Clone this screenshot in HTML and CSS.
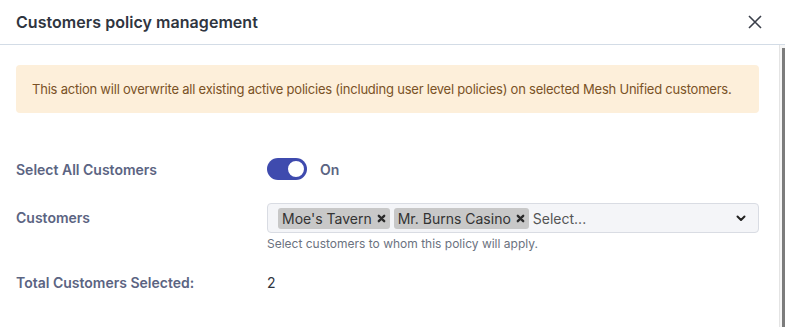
FILE: index.html
```html
<!DOCTYPE html>
<html lang="en">
<head>
    <meta charset="UTF-8" />
    <meta name="viewport" content="width=device-width, initial-scale=1.0" />
    <title>Customers policy management</title>
    <link rel="stylesheet" href="styles.css">
</head>
<body>
    <div class="modal">
        <header class="modal-header">
            <h2 class="modal-title">Customers policy management</h2>
            <button class="close-btn" aria-label="Close">
                <svg width="14" height="14" viewBox="0 0 14 14">
                    <path d="M1 1 L13 13 M13 1 L1 13" stroke="#3a3f4a" stroke-width="1.6" fill="none" />
                </svg>
            </button>
        </header>

        <div class="modal-body">
            <div class="body-content">
                <div class="alert">
                    This action will overwrite all existing active policies (including user level policies) on selected Mesh Unified customers.
                </div>

                <div class="form-row toggle-row">
                    <label class="form-label">Select All Customers</label>
                    <div class="form-field">
                        <span class="switch on"><span class="knob"></span></span>
                        <span class="switch-text">On</span>
                    </div>
                </div>

                <div class="form-row select-row">
                    <label class="form-label">Customers</label>
                    <div class="form-field column">
                        <div class="multi-select">
                            <span class="tag">Moe's Tavern
                                <svg width="9" height="9" viewBox="0 0 10 10"><path d="M2 2 L8 8 M8 2 L2 8" stroke="#2b2b2b" stroke-width="2.6" stroke-linecap="round" /></svg>
                            </span>
                            <span class="tag">Mr. Burns Casino
                                <svg width="9" height="9" viewBox="0 0 10 10"><path d="M2 2 L8 8 M8 2 L2 8" stroke="#2b2b2b" stroke-width="2.6" stroke-linecap="round" /></svg>
                            </span>
                            <span class="placeholder">Select...</span>
                            <svg class="chevron" width="10" height="7" viewBox="0 0 10 7"><path d="M1.5 1.5 L5 5 L8.5 1.5" stroke="#222" stroke-width="2" fill="none" stroke-linecap="round" stroke-linejoin="round" /></svg>
                        </div>
                        <small class="help-text">Select customers to whom this policy will apply.</small>
                    </div>
                </div>

                <div class="form-row total-row">
                    <label class="form-label">Total Customers Selected:</label>
                    <div class="form-field value">2</div>
                </div>
            </div>
            <div class="scrollbar"><div class="thumb"></div></div>
        </div>
    </div>
</body>
</html>
```

FILE: styles.css
```css
:root {
    --title-color: #2f3540;
    --label-color: #5b6482;
    --border-color: #d3dce6;
    --alert-bg: #fdefda;
    --alert-text: #7a5226;
    --primary: #3f4bae;
    --input-bg: #f4f5f8;
}
html, body {
    margin: 0;
    padding: 0;
    height: 100%;
}
body {
    font-family: 'Inter', 'Liberation Sans', Arial, sans-serif;
    background: #ffffff;
    color: var(--title-color);
    overflow: hidden;
}
.modal {
    display: flex;
    flex-direction: column;
    height: 327px;
}
.modal-header {
    display: flex;
    align-items: center;
    justify-content: space-between;
    height: 44px;
    padding: 0 22px 0 16px;
    border-bottom: 1px solid var(--border-color);
    flex-shrink: 0;
}
.modal-title {
    margin: 0;
    font-size: 16px;
    font-weight: 600;
    color: var(--title-color);
    letter-spacing: 0.05px;
}
.close-btn {
    background: none;
    border: none;
    padding: 0;
    width: 16px;
    height: 16px;
    display: flex;
    align-items: center;
    justify-content: center;
    cursor: pointer;
}
.modal-body {
    display: flex;
    flex: 1;
    min-height: 0;
}
.body-content {
    flex: 1;
    padding: 20px 20px 0 16px;
}
.scrollbar {
    width: 5px;
    border-left: 1px solid #e4e4e4;
    background: #f6f6f6;
    display: flex;
    justify-content: flex-end;
    padding-top: 3px;
}
.thumb {
    width: 3px;
    height: 100%;
    background: #7c7c7c;
}
.alert {
    background: var(--alert-bg);
    color: var(--alert-text);
    font-size: 13px;
    letter-spacing: -0.22px;
    line-height: 16px;
    padding: 16px 16px;
    border-radius: 4px;
    white-space: nowrap;
}
.form-row {
    display: flex;
    align-items: flex-start;
}
.form-label {
    width: 251px;
    flex-shrink: 0;
    font-size: 14px;
    font-weight: 600;
    color: var(--label-color);
}
.form-field {
    flex: 1;
    display: flex;
    align-items: center;
}
.form-field.column {
    flex-direction: column;
    align-items: stretch;
}
.toggle-row {
    margin-top: 45px;
    align-items: center;
    height: 22px;
}
.switch {
    width: 40px;
    height: 22px;
    border-radius: 11px;
    background: #c9ccd6;
    position: relative;
    box-sizing: border-box;
}
.switch.on {
    background: var(--primary);
}
.knob {
    position: absolute;
    top: 1px;
    right: 1px;
    width: 20px;
    height: 20px;
    box-sizing: border-box;
    border-radius: 50%;
    background: #ffffff;
    border: 2px solid var(--primary);
}
.switch-text {
    margin-left: 13px;
    font-size: 14px;
    font-weight: 600;
    color: var(--label-color);
}
.select-row {
    margin-top: 23px;
}
.select-row .form-label {
    line-height: 30px;
}
.multi-select {
    display: flex;
    align-items: center;
    gap: 4px;
    height: 30px;
    box-sizing: border-box;
    padding: 0 10px 0 10px;
    background: var(--input-bg);
    border: 1px solid #d9dce3;
    border-radius: 4px;
}
.tag {
    display: flex;
    align-items: center;
    gap: 5px;
    height: 21px;
    padding: 0 4px;
    background: #c8c8c8;
    border-radius: 3px;
    font-size: 14px;
    color: #333;
}
.placeholder {
    flex: 1;
    font-size: 14px;
    color: #555;
}
.chevron {
    margin-right: 2px;
}
.help-text {
    margin-top: 3px;
    font-size: 12px;
    line-height: 15px;
    color: #6b7280;
}
.total-row {
    margin-top: 23px;
    line-height: 18px;
}
.value {
    font-size: 14px;
    color: var(--title-color);
}
```
